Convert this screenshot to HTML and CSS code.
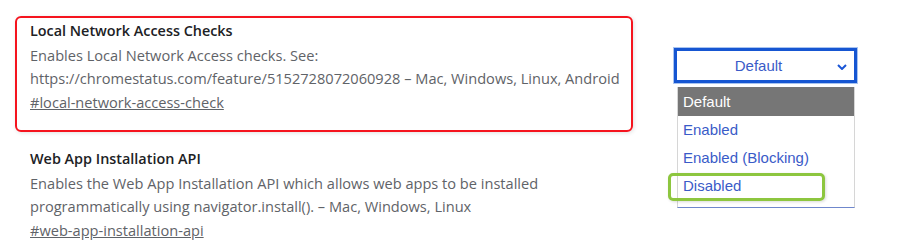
FILE: index.html
```html
<!DOCTYPE html>
<html lang="en">

<head>
    <meta charset="UTF-8">
    <title>Experiments</title>
    <link rel="stylesheet" href="styles.css">
</head>

<body>
    <div class="page">
        <div class="flags">
            <div class="flag highlighted">
                <h3 class="flag-name">Local Network Access Checks</h3>
                <p class="flag-desc">Enables Local Network Access checks. See:<br>https://chromestatus.com/feature/5152728072060928 – Mac, Windows, Linux, Android</p>
                <a class="flag-link" href="#local-network-access-check">#local-network-access-check</a>
            </div>

            <div class="flag">
                <h3 class="flag-name">Web App Installation API</h3>
                <p class="flag-desc">Enables the Web App Installation API which allows web apps to be installed<br>programmatically using navigator.install(). – Mac, Windows, Linux</p>
                <a class="flag-link" href="#web-app-installation-api">#web-app-installation-api</a>
            </div>
        </div>

        <div class="control">
            <div class="select">
                <span>Default</span>
                <svg class="chevron" width="10" height="6" viewBox="0 0 10 6">
                    <path d="M1 1l4 4 4-4" fill="none" stroke="#1a56d6" stroke-width="2"/>
                </svg>
            </div>
            <ul class="options">
                <li class="selected">Default</li>
                <li>Enabled</li>
                <li>Enabled (Blocking)</li>
                <li>Disabled</li>
            </ul>
            <div class="mark"></div>
        </div>
    </div>
</body>

</html>
```

FILE: styles.css
```css
body {
    margin: 0;
    background: #fff;
    font-family: "Open Sans", "Noto Sans", sans-serif;
}

.page {
    display: flex;
    padding: 16px 0 0 15px;
}

.flags {
    width: 618px;
    flex-shrink: 0;
}

.flag {
    padding: 3px 15px 0 15px;
}

.flag.highlighted {
    padding: 3px 13px 0 13px;
    border: 2px solid #f5141e;
    border-radius: 6px;
    box-shadow: 1px 1px 4px rgba(0, 0, 0, 0.12);
    box-sizing: border-box;
    height: 116px;
    margin-bottom: 14px;
}

.flag-name {
    margin: 0;
    font-size: 14.4px;
    font-weight: 600;
    line-height: 20px;
    color: #202124;
}

.flag-desc {
    margin: 3px 0 0 0;
    font-size: 14.6px;
    line-height: 23px;
    color: #5f6368;
    white-space: nowrap;
}

.flag-link {
    display: inline-block;
    margin-top: 2px;
    font-size: 14.6px;
    line-height: 20px;
    color: #5f6368;
}

.control {
    position: relative;
    margin-left: 41px;
    margin-top: 32px;
}

.select {
    width: 183px;
    height: 35px;
    box-sizing: border-box;
    border: 3px solid #1656d2;
    box-shadow: 0 0 0 1px #a9c4f0;
    padding-right: 14px;
    display: flex;
    align-items: center;
    justify-content: center;
    position: relative;
    font-family: "Liberation Sans", Arial, sans-serif;
    font-size: 15px;
    color: #3a5bc8;
}

.chevron {
    position: absolute;
    right: 7px;
    top: 13px;
}

.options {
    position: absolute;
    top: 39px;
    left: 3px;
    width: 178px;
    height: 121px;
    box-sizing: border-box;
    margin: 0;
    padding: 0;
    list-style: none;
    background: #fff;
    border: 1px solid #d6d6d6;
    border-bottom-color: #6f87cc;
    border-top: none;
    font-family: "Liberation Sans", Arial, sans-serif;
    font-size: 15px;
    color: #3a5bc8;
}

.options li {
    height: 28px;
    line-height: 28px;
    padding-left: 5px;
}

.options li.selected {
    height: 29px;
    line-height: 29px;
    background: #767676;
    color: #fff;
}

.mark {
    position: absolute;
    left: -6px;
    top: 125px;
    width: 157px;
    height: 28px;
    box-sizing: border-box;
    border: 3px solid #8dc63f;
    border-radius: 5px;
    box-shadow: 1px 1px 3px rgba(0, 0, 0, 0.15);
}
```
